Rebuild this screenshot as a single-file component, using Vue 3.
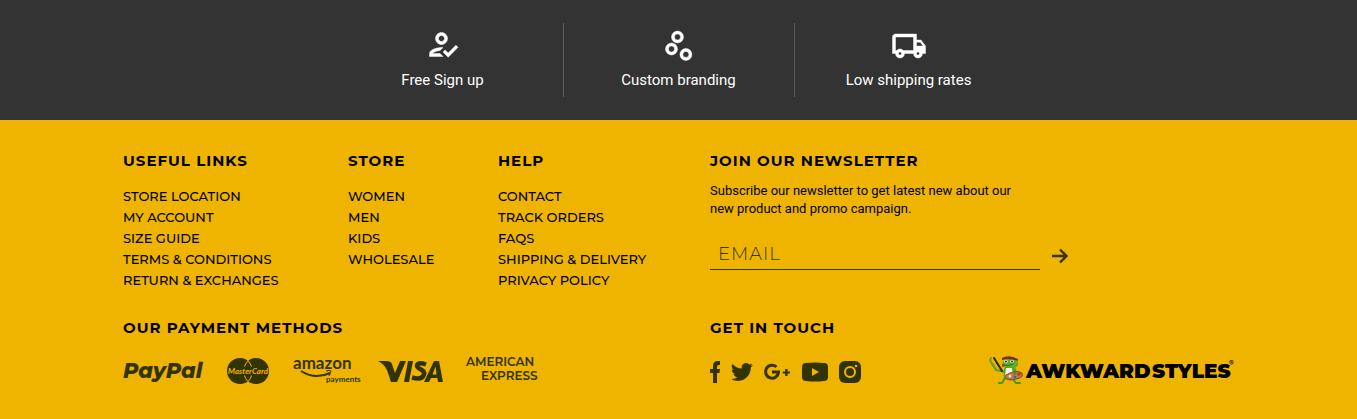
<script setup>
import { ref } from 'vue'

const email = ref('')

const perks = [
  {
    label: 'Free Sign up',
    box: '0 1 24 24',
    path: 'M11 12c2.21 0 4-1.79 4-4s-1.79-4-4-4-4 1.79-4 4 1.79 4 4 4zm0-6c1.1 0 2 .9 2 2s-.9 2-2 2-2-.9-2-2 .9-2 2-2zM5 18c.2-.63 2.57-1.68 4.96-1.94l2.04-2c-.39-.04-.68-.06-1-.06-2.67 0-8 1.34-8 4v2h9l-2-2H5zm15.6-5.5l-5.13 5.17-2.07-2.08L12 17l3.47 3.5L22 13.91z'
  },
  {
    label: 'Custom branding',
    box: '0 0 24 24',
    path: 'M7 10a4 4 0 1 0 0 8 4 4 0 0 0 0-8zm0 6a2 2 0 1 1 0-4 2 2 0 0 1 0 4zM11 2a4 4 0 1 0 0 8 4 4 0 0 0 0-8zm0 6a2 2 0 1 1 0-4 2 2 0 0 1 0 4zM16.600 13.600a4 4 0 1 0 0 8 4 4 0 0 0 0-8zm0 6a2 2 0 1 1 0-4 2 2 0 0 1 0 4z'
  },
  {
    label: 'Low shipping rates',
    box: '0 0 24 24',
    path: 'M20 8h-3V4H3c-1.100 0-2 .9-2 2v11h2c0 1.660 1.340 3 3 3s3-1.340 3-3h6c0 1.660 1.340 3 3 3s3-1.340 3-3h2v-5l-3-4zm-.5 1.500l1.960 2.500H17V9.500h2.500zM6 18c-.55 0-1-.45-1-1s.45-1 1-1 1 .45 1 1-.45 1-1 1zm2.220-3c-.55-.61-1.330-1-2.220-1s-1.670.39-2.220 1H3V6h12v9H8.220zM18 18c-.55 0-1-.45-1-1s.45-1 1-1 1 .45 1 1-.45 1-1 1z'
  }
]

const columns = [
  { title: 'USEFUL LINKS', links: ['STORE LOCATION', 'MY ACCOUNT', 'SIZE GUIDE', 'TERMS & CONDITIONS', 'RETURN & EXCHANGES'] },
  { title: 'STORE', links: ['WOMEN', 'MEN', 'KIDS', 'WHOLESALE'] },
  { title: 'HELP', links: ['CONTACT', 'TRACK ORDERS', 'FAQS', 'SHIPPING & DELIVERY', 'PRIVACY POLICY'] }
]
</script>

<template>
  <div class="page">
    <section class="perks">
      <div v-for="perk in perks" :key="perk.label" class="perk">
        <svg width="36" height="36" :viewBox="perk.box" fill="#fff" stroke="#fff" stroke-width=".3" aria-hidden="true"><path :d="perk.path" /></svg>
        <span>{{ perk.label }}</span>
      </div>
    </section>

    <footer class="footer">
      <div class="container">
        <div class="links">
          <nav v-for="col in columns" :key="col.title" :aria-label="col.title">
            <h2>{{ col.title }}</h2>
            <ul>
              <li v-for="link in col.links" :key="link"><a href="#">{{ link }}</a></li>
            </ul>
          </nav>
        </div>

        <div class="newsletter">
          <h2>JOIN OUR NEWSLETTER</h2>
          <p>Subscribe our newsletter to get latest new about our new product and promo campaign.</p>
          <form @submit.prevent>
            <input v-model="email" type="email" placeholder="EMAIL" aria-label="Email" />
            <button type="submit" aria-label="Subscribe">
              <svg width="16" height="16" viewBox="0 0 16 16" fill="none" stroke="#333300" stroke-width="2.400"><path d="M0 8h14M8 1.500l6.500 6.500L8 14.500" /></svg>
            </button>
          </form>
        </div>

        <div class="payments">
          <h2>OUR PAYMENT METHODS</h2>
          <div class="brands">
            <svg width="89" height="30" role="img" aria-label="PayPal">
              <text x="0" y="22" class="paypal">PayPal</text>
            </svg>
            <svg width="51" height="30" role="img" aria-label="MasterCard">
              <ellipse cx="13" cy="15" rx="13" ry="13" />
              <ellipse cx="29" cy="15" rx="13" ry="13" />
              <path d="M21 4.500q-3 4-3.500 6M21 4.500q3 4 3.500 6M21 25.500q-3-3-3.500-6M21 25.500q3-3 3.500-6" fill="none" stroke="#efb400" stroke-width="1" />
              <text x="1" y="18" class="mastercard">MasterCard</text>
            </svg>
            <svg width="70" height="30" role="img" aria-label="amazon payments">
              <text x="0" y="13" class="amazon">amazon</text>
              <path d="M8 15q14 9 29 2" fill="none" stroke="#333300" stroke-width="2" />
              <path d="M33 15q5-1 5 0t-2 5" fill="none" stroke="#333300" stroke-width="1" />
              <text x="33" y="26" class="amazon-sub">payments</text>
            </svg>
            <svg width="73" height="30" role="img" aria-label="Visa">
              <path d="M0 5h8q5 0 6 3l3 9 5-12h6L19 26h-6L9 14Q6 8 0 5z" />
              <path d="M30 5h5l-4 21h-5z" />
              <path d="M48 8.500q-8-3-9 1 0 2 4 4 4 2 3 5-2 6-12 3" fill="none" stroke="#333300" stroke-width="4.500" />
              <path fill-rule="evenodd" d="M56 5h5l4 21h-5l-.6-4H53l-2 4h-5zM57.500 10.500l-3 8h4z" />
            </svg>
            <svg width="71" height="30" role="img" aria-label="American Express">
              <text x="0" y="10" class="amex">AMERICAN</text>
              <text x="15" y="24" class="amex">EXPRESS</text>
            </svg>
          </div>
        </div>

        <div class="contact">
          <h2>GET IN TOUCH</h2>
          <div class="contact-row">
            <div class="social">
              <a href="#" aria-label="Facebook">
                <svg width="10" height="22" viewBox="0 0 10 22"><path d="M3 22V12H0V8h3V5q0-5 5-5h2v4H8.500Q7 4 7 5.500V8h3l-.5 4H7v10z" /></svg>
              </a>
              <a href="#" aria-label="Twitter">
                <svg width="22" height="22" viewBox="0 0 24 24"><path d="M23.950 4.570a10 10 0 0 1-2.820.77 4.960 4.960 0 0 0 2.160-2.720c-.95.55-2 .95-3.120 1.180a4.920 4.920 0 0 0-8.390 4.480C7.690 8.090 4.070 6.130 1.640 3.160a4.920 4.920 0 0 0 1.520 6.570 4.900 4.900 0 0 1-2.230-.61v.06a4.920 4.920 0 0 0 3.950 4.830 5 5 0 0 1-2.210.08 4.940 4.940 0 0 0 4.600 3.420A9.870 9.870 0 0 1 0 19.540a13.990 13.990 0 0 0 7.550 2.210c9.050 0 14-7.500 14-13.980 0-.21 0-.42-.02-.63a9.940 9.940 0 0 0 2.460-2.550z" /></svg>
              </a>
              <a href="#" aria-label="Google Plus">
                <svg width="27" height="22" viewBox="0 0 27 22"><path d="M12.500 6A6.500 6.500 0 1 0 14.500 11H8" fill="none" stroke="#333300" stroke-width="3" /><path d="M20.500 7h3v3h3v2.500h-3v3h-3v-3h-3V10h3z" transform="translate(4.800 2.500) scale(.8)" /></svg>
              </a>
              <a href="#" aria-label="YouTube">
                <svg width="26" height="22" viewBox="0 0 26 22"><path fill-rule="evenodd" d="M4 2q9-1 18 0 4 0 4 4v10q0 4-4 4-9 1-18 0-4 0-4-4V6q0-4 4-4zM10 7v8l7-4z" /></svg>
              </a>
              <a href="#" aria-label="Instagram">
                <svg width="22" height="22" viewBox="0 0 22 22"><rect width="22" height="22" rx="6" /><circle cx="11" cy="11" r="5" fill="none" stroke="#efb400" stroke-width="2" /><circle cx="17" cy="5" r="1.300" fill="#efb400" /></svg>
              </a>
            </div>
            <a class="logo" href="#" aria-label="Awkward Styles">
              <svg width="246" height="32" viewBox="0 0 246 32">
                <g stroke-linecap="round" stroke-linejoin="round">
                  <path d="M17 22l-3 5h-3M24 22l4 5h4" fill="none" stroke="#3f9a1c" stroke-width="2" />
                  <path d="M17 16l-9-2-4-6" fill="none" stroke="#4fa822" stroke-width="2" />
                  <path d="M3 2q-2 3 1 5l4 6" fill="none" stroke="#6f9f3a" stroke-width="2" />
                  <path d="M6 2l8 13" fill="none" stroke="#202818" stroke-width="2" />
                  <path d="M17 11q8-2 11 2l2 9q-6 5-13 0-3-6 0-11z" fill="#4fa822" />
                  <path d="M18 12h6l1 8-4 2-4-2z" fill="#f5f5df" />
                  <path d="M15 5q8-4 15 1 1 6-6 6-8 0-10-3z" fill="#58ae25" />
                  <path d="M14 2q7-4 16 1v2q-8-3-16-1z" fill="#66361c" />
                  <circle cx="18" cy="5.500" r="1.800" fill="#f5f5df" /><circle cx="24" cy="5.500" r="1.800" fill="#f5f5df" />
                  <circle cx="18" cy="5.500" r="1" fill="#222" /><circle cx="24" cy="5.500" r="1" fill="#222" />
                  <path d="M15 9q5 2 10-1" fill="none" stroke="#2f6f18" stroke-width="1" />
                  <path d="M15 9v1" fill="none" stroke="#d6301f" stroke-width="2" />
                  <path d="M18 19q10-6 16-2 2 5-6 6-8 2-11-1z" fill="#bd7948" stroke="#79512d" stroke-width="1" />
                  <circle cx="22" cy="20" r="1.500" fill="#e8dcc8" /><circle cx="27" cy="17.500" r="1.500" fill="#3f9a1c" /><circle cx="31" cy="18" r="1.800" fill="#d6301f" /><circle cx="27" cy="21" r="1.300" fill="#315fba" />
                </g>
                <text x="38" y="22" class="wordmark">AWKWARD</text>
                <text x="164" y="22" class="wordmark">STYLES</text>
                <text x="241" y="10" class="registered">®</text>
              </svg>
            </a>
          </div>
        </div>
      </div>
    </footer>
  </div>
</template>

<style>
body {
  margin: 0;
  background: #efb400;
}
</style>

<style scoped>
.page {
  font-family: Montserrat, Inter, "Liberation Sans", sans-serif;
  color: #000;
}
.perks {
  display: grid;
  grid-template-columns: 240px 231px 229px;
  justify-content: center;
  padding: 23px 12px 23px 0;
  background: #333;
}
.perk {
  display: flex;
  flex-direction: column;
  align-items: center;
  gap: 6px;
  box-sizing: border-box;
  height: 74px;
  padding-top: 5px;
  color: #fff;
  font: 15px/20px Roboto, sans-serif;
}
.perk + .perk {
  border-left: 1px solid #5c5c5c;
}
.perk svg,
.brands svg,
.social svg,
.logo svg {
  display: block;
  overflow: visible;
}
.footer {
  background: #efb400;
  padding: 31px 24px 32px;
}
.container {
  display: grid;
  grid-template-columns: 587fr 524fr;
  row-gap: 27px;
  max-width: 1111px;
  margin: 0 auto;
}
h2 {
  margin: 0;
  font-size: 15px;
  font-weight: 700;
  line-height: 20px;
  letter-spacing: 1px;
}
.links {
  display: grid;
  grid-template-columns: 225fr 150fr 212fr;
}
ul {
  margin: 15px 0 0;
  padding: 0;
  list-style: none;
}
li {
  font-size: 13px;
  font-weight: 500;
  line-height: 21px;
}
a {
  color: inherit;
  text-decoration: none;
}
.newsletter p {
  max-width: 320px;
  margin: 11px 0 0;
  font: 13px/18px Roboto, sans-serif;
}
form {
  display: flex;
  align-items: center;
  gap: 12px;
  margin-top: 24px;
}
input {
  box-sizing: border-box;
  width: 330px;
  height: 28px;
  padding: 0 8px 4px;
  border: 0;
  border-bottom: 1px solid #333300;
  outline: 0;
  background: transparent;
  color: #333300;
  font: 300 18px/22px Montserrat, Lato, sans-serif;
  letter-spacing: 1px;
}
input::placeholder {
  color: #333300;
  opacity: 1;
}
button {
  display: flex;
  padding: 0;
  border: 0;
  background: transparent;
  cursor: pointer;
}
.brands {
  display: flex;
  gap: 15px;
  margin-top: 18px;
  fill: #333300;
}
.contact-row {
  display: flex;
  align-items: center;
  justify-content: space-between;
  margin-top: 18px;
}
.social {
  display: flex;
  align-items: center;
  gap: 11px;
  fill: #333300;
}
.paypal {
  font: italic 800 21px Montserrat, Lato, sans-serif;
}
.mastercard {
  fill: #efb400;
  font: italic 700 8px Lato, sans-serif;
}
.amazon {
  font: 700 17px Lato, sans-serif;
}
.amazon-sub {
  font: 700 8px Lato, sans-serif;
}
.amex {
  font: 600 12px Montserrat, "Liberation Sans", sans-serif;
}
.wordmark {
  font: 900 20px Montserrat, Inter, sans-serif;
}
.registered {
  font: 7px Inter, sans-serif;
}
</style>
